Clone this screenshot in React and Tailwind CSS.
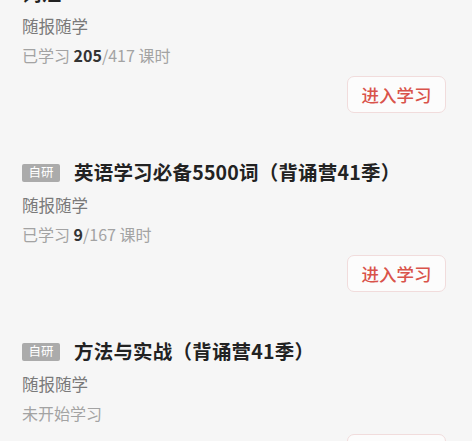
import React from 'react';

const courses = [
  { id: 1, tag: null, title: '词汇', mode: '随报随学', done: 205, total: 417 },
  { id: 2, tag: '自研', title: '英语学习必备5500词（背诵营41季）', mode: '随报随学', done: 9, total: 167 },
  { id: 3, tag: '自研', title: '方法与实战（背诵营41季）', mode: '随报随学', done: 0, total: 0 },
];

const CourseCard = ({ course }) => (
  <div className="pl-[22px] pr-[26px] pb-[47px]">
    <div className="flex items-center h-[24px]">
      {course.tag && (
        <span className="w-[38px] h-[18px] mt-[1px] mr-[14px] flex items-center justify-center rounded-[2px] bg-[#ababab] text-white text-[12.5px] leading-none">
          {course.tag}
        </span>
      )}
      <h3 className="text-[19.5px] leading-[24px] font-bold text-[#222] tracking-[0.2px]">{course.title}</h3>
    </div>
    <p className="mt-[10px] text-[16.5px] leading-[22px] text-[#7a7a7a]">{course.mode}</p>
    <p className="mt-[7px] text-[16px] leading-[22px] text-[#a3a3a3]">
      {course.done > 0 ? (
        <>
          已学习 <span className="font-bold text-[#333]">{course.done}</span>/{course.total} 课时
        </>
      ) : (
        '未开始学习'
      )}
    </p>
    <div className="flex justify-end mt-[10px]">
      <button className="w-[99px] h-[37px] rounded-[7px] border border-[#f1dcdc] bg-[#fcfcfc] text-[#d9534a] text-[17.5px] font-medium leading-none">
        进入学习
      </button>
    </div>
  </div>
);

export default function App() {
  return (
    <div
      className="min-h-screen bg-[#f6f6f6] overflow-hidden"
      style={{ fontFamily: '"Noto Sans CJK SC", "Noto Sans", sans-serif' }}
    >
      <div className="-mt-[19px]">
        {courses.map((c) => (
          <CourseCard key={c.id} course={c} />
        ))}
      </div>
    </div>
  );
}
